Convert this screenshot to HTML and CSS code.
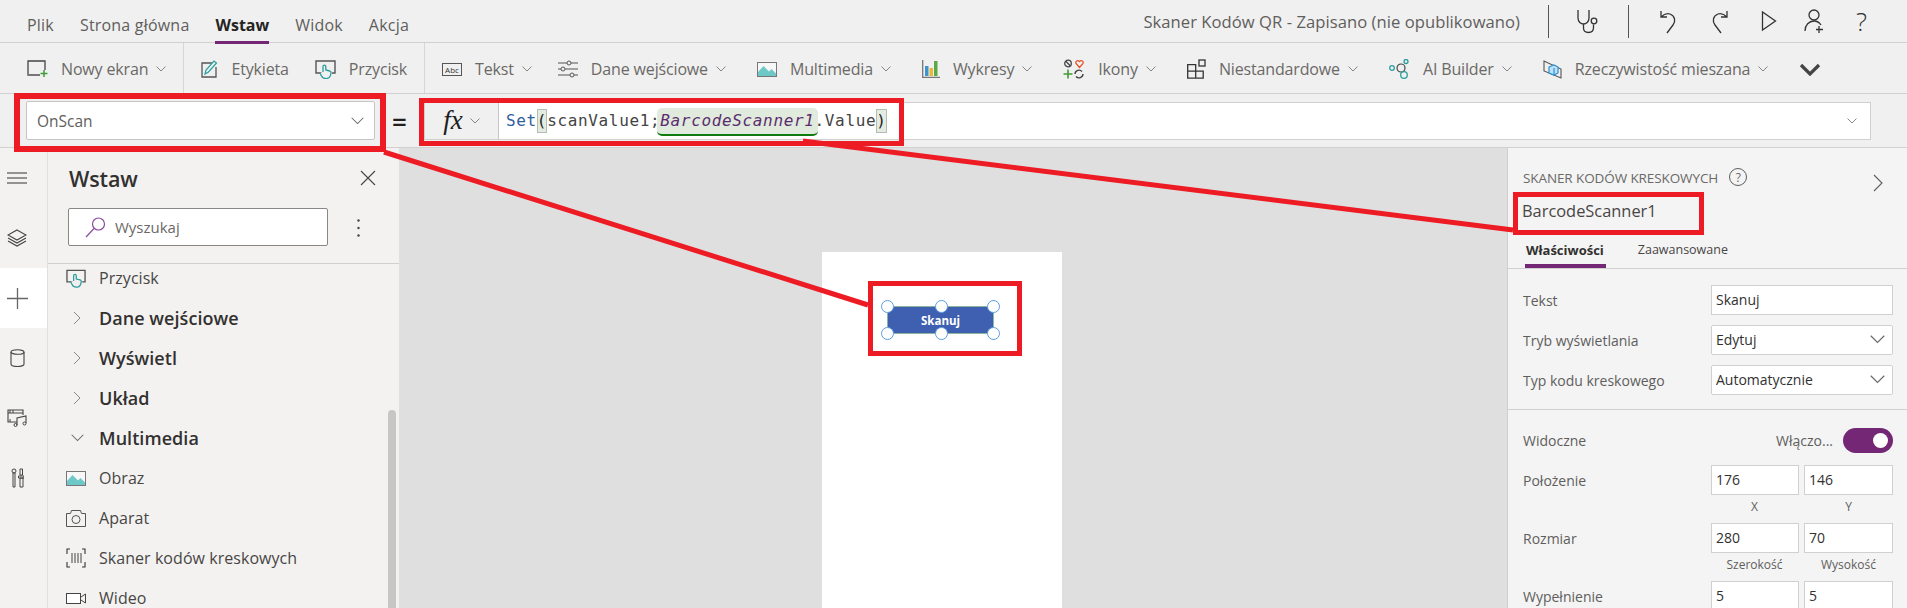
FILE: index.html
```html
<!DOCTYPE html>
<html lang="pl">
<head>
<meta charset="utf-8">
<title>Skaner Kodów QR</title>
<link rel="stylesheet" href="styles.css">
</head>
<body>
<svg class="sprite" width="0" height="0">
  <symbol id="chev" viewBox="0 0 10 6"><path d="M.5.5 5 5 9.500.5" fill="none" stroke="#6b6967" stroke-width=".8"/></symbol>
  <symbol id="chevr" viewBox="0 0 8 14"><path d="M1 1l6 6-6 6" fill="none" stroke="#8a8886"/></symbol>
  <symbol id="btn" viewBox="0 0 21 19"><path d="M7 13H1V1h19v12h-3" fill="none" stroke="#555" stroke-width="1.400"/><path d="M8 12V6.500a1.400 1.400 0 0 1 2.800 0V10l4 1c1 .3 1.300 1 1.200 2-.2 2-1 5-4 5.500-3 .3-5-1-5.800-3L5 13" fill="#f0f0f0" stroke="#2a9d9d" stroke-width="1.300"/></symbol>
  <symbol id="img" viewBox="0 0 20 15"><rect x=".5" y=".5" width="19" height="14" fill="#f7f7f7" stroke="#777"/><path d="M1 14V10L6.500 4 12 9.500l2.500-2.500L19 11.500V14z" fill="#6fc8c8"/></symbol>
</svg>

<header class="topbar">
  <nav class="tabs">
    <span class="tab">Plik</span>
    <span class="tab">Strona główna</span>
    <span class="tab tab-on">Wstaw</span>
    <span class="tab">Widok</span>
    <span class="tab">Akcja</span>
  </nav>
  <div class="title">Skaner Kodów QR - Zapisano (nie opublikowano)</div>
  <span class="vsep"></span>
  <svg class="ticon steth" width="26" height="26" viewBox="0 0 26 26"><path d="M3 2v8c0 4 3 6 5.500 6S14 14 14 10V2M8.500 16v4c0 3 2 4.500 5 4.500s5-2 5-5v-3" fill="none" stroke="#333" stroke-width="1.300"/><circle cx="19" cy="13" r="2.800" fill="none" stroke="#333" stroke-width="1.300"/></svg>
  <span class="vsep vsep2"></span>
  <svg class="ticon undo" width="20" height="26" viewBox="0 0 20 26"><path d="M2 3v6h6M2 9c3-3 6-4 9-3 5 2 6 7 3 11l-6 8" fill="none" stroke="#333" stroke-width="1.300"/></svg>
  <svg class="ticon redo" width="20" height="26" viewBox="0 0 20 26"><path d="M18 3v6h-6M18 9c-3-3-6-4-9-3-5 2-6 7-3 11l6 8" fill="none" stroke="#333" stroke-width="1.300"/></svg>
  <svg class="ticon play" width="16" height="22" viewBox="0 0 16 22"><path d="M1.500 2v18L14.500 11z" fill="none" stroke="#333" stroke-width="1.300"/></svg>
  <svg class="ticon user" width="24" height="26" viewBox="0 0 24 26"><circle cx="10" cy="7" r="5" fill="none" stroke="#333" stroke-width="1.300"/><path d="M1 23c0-6 4-10 9-10 3 0 5 1 7 4M15 25v-7M12 21.500h7" fill="none" stroke="#333" stroke-width="1.300"/></svg>
  <span class="ticon help">?</span>
</header>

<div class="toolbar">
  <div class="tool"><svg width="21" height="18" viewBox="0 0 21 18"><path d="M13 15H1V1h17v9" fill="none" stroke="#444" stroke-width="1.300"/><path d="M1 15h12" stroke="#777" stroke-width="2"/><path d="M17 10v7M13.500 13.500h7" stroke="#3f9c35" stroke-width="1.500"/></svg><span>Nowy ekran</span><svg class="chev" width="10" height="6"><use href="#chev"/></svg></div>
  <span class="tsep"></span>
  <div class="tool"><svg width="17" height="18" viewBox="0 0 17 18"><path d="M11 3H1v14h14V7" fill="none" stroke="#555" stroke-width="1.300"/><path d="M4 14l1-4 8-9 2.500 2-8 9z" fill="#e8f4f4" stroke="#2a9d9d" stroke-width="1.200"/></svg><span>Etykieta</span></div>
  <div class="tool tool-near"><svg width="21" height="19"><use href="#btn"/></svg><span>Przycisk</span></div>
  <span class="tsep"></span>
  <div class="tool"><svg width="20" height="13" viewBox="0 0 20 13"><rect x=".5" y=".5" width="19" height="12" fill="none" stroke="#555"/><text x="10" y="9.500" text-anchor="middle" class="abc">Abc</text></svg><span>Tekst</span><svg class="chev" width="10" height="6"><use href="#chev"/></svg></div>
  <div class="tool tool-near"><svg width="20" height="18" viewBox="0 0 20 18"><path d="M0 3h9M13 3h7M0 9h3M7 9h13M0 15h12M16 15h4" stroke="#555"/><circle cx="11" cy="3" r="2" fill="none" stroke="#555"/><circle cx="5" cy="9" r="2" fill="none" stroke="#555"/><circle cx="14" cy="15" r="2" fill="none" stroke="#555"/></svg><span>Dane wejściowe</span><svg class="chev" width="10" height="6"><use href="#chev"/></svg></div>
  <div class="tool"><svg width="20" height="15"><use href="#img"/></svg><span>Multimedia</span><svg class="chev" width="10" height="6"><use href="#chev"/></svg></div>
  <div class="tool"><svg width="18" height="18" viewBox="0 0 18 18"><path d="M.7 0v17.300H18" fill="none" stroke="#777" stroke-width="1.300"/><rect x="3" y="6" width="3.500" height="10" fill="#3f94d0"/><rect x="7.500" y="8" width="3.500" height="8" fill="#e8b83c"/><rect x="12" y="1" width="3.500" height="15" fill="#5aa84a"/></svg><span>Wykresy</span><svg class="chev" width="10" height="6"><use href="#chev"/></svg></div>
  <div class="tool"><svg width="22" height="20" viewBox="0 0 22 20"><circle cx="5" cy="4.500" r="3.300" fill="none" stroke="#444" stroke-width="1.300"/><path d="M2.800 2.300l4.500 4.500" stroke="#444" stroke-width="1.300"/><path d="M16.500 8.500l-3.500-4c-1-2 1.500-4 3.500-2 2-2 4.500 0 3.500 2z" fill="none" stroke="#e5532a" stroke-width="1.300"/><path d="M5 10.500v9M.5 15h9" stroke="#3f9c35" stroke-width="1.600"/><path d="M12 15a4 4 0 0 1 7-2.500M20 15a4 4 0 0 1-7 2.500" fill="none" stroke="#444" stroke-width="1.400"/></svg><span>Ikony</span><svg class="chev" width="10" height="6"><use href="#chev"/></svg></div>
  <div class="tool"><svg width="19" height="20" viewBox="0 0 19 20"><path d="M.7 5.700h8v6.500h-8zM8.700 12.200h7.500v7h-7.500zM.7 12.200h8v7h-8z" fill="none" stroke="#333" stroke-width="1.300"/><rect x="12" y="1" width="6" height="6" fill="none" stroke="#333" stroke-width="1.300"/></svg><span>Niestandardowe</span><svg class="chev" width="10" height="6"><use href="#chev"/></svg></div>
  <div class="tool"><svg width="21" height="20" viewBox="0 0 21 20"><circle cx="3" cy="9" r="2.300" fill="none" stroke="#2a9d9d" stroke-width="1.300"/><circle cx="12" cy="9" r="4" fill="none" stroke="#444" stroke-width="1.200"/><circle cx="17" cy="2.500" r="2" fill="none" stroke="#2a9d9d" stroke-width="1.300"/><circle cx="15" cy="16" r="3.300" fill="none" stroke="#2a9d9d" stroke-width="1.300"/></svg><span>AI Builder</span><svg class="chev" width="10" height="6"><use href="#chev"/></svg></div>
  <div class="tool"><svg width="19" height="19" viewBox="0 0 19 19"><path d="M1 1l17 8v9L1 11z" fill="none" stroke="#555" stroke-width="1.100"/><path d="M6 7l5-2 4 2v6l-4 2-5-2z" fill="#bfe0f5" stroke="#2d8fd5" stroke-width="1.200"/><path d="M11 8v7" stroke="#2d8fd5" stroke-width="1.200"/></svg><span>Rzeczywistość mieszana</span><svg class="chev" width="10" height="6"><use href="#chev"/></svg></div>
  <svg class="more" width="22" height="13" viewBox="0 0 22 13"><path d="M2 2l9 9 9-9" fill="none" stroke="#444" stroke-width="3.200"/></svg>
</div>

<div class="formula">
  <div class="prop"><span>OnScan</span><svg width="13" height="8" viewBox="0 0 10 6"><use href="#chev"/></svg></div>
  <div class="eq">=</div>
  <div class="fx"><span class="fx-mark">fx</span><svg width="10" height="6"><use href="#chev"/></svg></div>
  <div class="code">
    <div class="code-text"><span class="k">Set</span><span class="br">(</span>scanValue1;<span class="ref">BarcodeScanner1</span>.Value<span class="br">)</span></div>
    <svg width="10" height="6"><use href="#chev"/></svg>
  </div>
</div>

<main class="main">
  <aside class="rail">
    <div class="rail-i"><svg width="20" height="12" viewBox="0 0 20 12"><path d="M0 1h20M0 6h20M0 11h20" stroke="#333"/></svg></div>
    <div class="rail-i"><svg width="20" height="18" viewBox="0 0 20 18"><path d="M10 1l9 5-9 5-9-5zM1 9l9 5 9-5M1 12l9 5 9-5" fill="none" stroke="#444" stroke-width="1.100"/></svg></div>
    <div class="rail-i rail-on"><svg width="21" height="21" viewBox="0 0 21 21"><path d="M10.500 0v21M0 10.500h21" stroke="#666" stroke-width="1.300"/></svg></div>
    <div class="rail-i"><svg width="15" height="18" viewBox="0 0 15 18"><path d="M1 3v12c0 1.500 3 2.500 6.500 2.500S14 16.500 14 15V3" fill="none" stroke="#444" stroke-width="1.100"/><ellipse cx="7.500" cy="3" rx="6.500" ry="2.300" fill="none" stroke="#444" stroke-width="1.100"/></svg></div>
    <div class="rail-i"><svg width="21" height="18" viewBox="0 0 21 18"><path d="M10 13H1V1h15v5" fill="none" stroke="#444" stroke-width="1.100"/><path d="M1 4h15M3 1v3M6 1v3M3 10v3" stroke="#444"/><path d="M10 16V9l9-2v7" fill="none" stroke="#444" stroke-width="1.100"/><circle cx="8.500" cy="16" r="1.500" fill="none" stroke="#444"/><circle cx="17.500" cy="14.500" r="1.500" fill="none" stroke="#444"/></svg></div>
    <div class="rail-i"><svg width="13" height="20" viewBox="0 0 13 20"><circle cx="3" cy="3" r="2" fill="none" stroke="#444"/><path d="M2 5h2v14H2zM9 1h2.500v6H9zM7.500 8h5.500v2H7.500zM9 10h3v9H9z" fill="none" stroke="#444"/></svg></div>
  </aside>

  <section class="panel">
    <div class="panel-head">
      <h2>Wstaw</h2>
      <svg width="16" height="16" viewBox="0 0 16 16"><path d="M1 1l14 14M15 1L1 15" stroke="#444" stroke-width="1.100"/></svg>
    </div>
    <div class="search-row">
      <div class="search">
        <svg width="21" height="21" viewBox="0 0 21 21"><circle cx="13.500" cy="7" r="6" fill="none" stroke="#8a4d9e" stroke-width="1.200"/><path d="M9 11.500L1 20" stroke="#8a4d9e" stroke-width="1.200"/></svg>
        <span>Wyszukaj</span>
      </div>
      <svg class="dots" width="3" height="18" viewBox="0 0 3 18"><circle cx="1.500" cy="1.500" r="1.200" fill="#444"/><circle cx="1.500" cy="9" r="1.200" fill="#444"/><circle cx="1.500" cy="16.500" r="1.200" fill="#444"/></svg>
    </div>
    <div class="list">
      <div class="item"><svg width="20" height="19"><use href="#btn"/></svg><span>Przycisk</span></div>
      <div class="group"><svg width="8" height="14"><use href="#chevr"/></svg><span>Dane wejściowe</span></div>
      <div class="group"><svg width="8" height="14"><use href="#chevr"/></svg><span>Wyświetl</span></div>
      <div class="group"><svg width="8" height="14"><use href="#chevr"/></svg><span>Układ</span></div>
      <div class="group group-open"><svg width="13" height="8" viewBox="0 0 10 6"><use href="#chev"/></svg><span>Multimedia</span></div>
      <div class="item"><svg width="20" height="15"><use href="#img"/></svg><span>Obraz</span></div>
      <div class="item"><svg width="20" height="17" viewBox="0 0 20 17"><path d="M.5 3.500h4l1-3h9l1 3h4v13H.5z" fill="none" stroke="#555"/><circle cx="10" cy="9.500" r="4" fill="none" stroke="#555"/></svg><span>Aparat</span></div>
      <div class="item"><svg width="20" height="20" viewBox="0 0 20 20"><path d="M4 1H1v5M16 1h3v5M4 19H1v-5M16 19h3v-5" fill="none" stroke="#333" stroke-width="1.100"/><path d="M6 5v10M9 5v10M12 5v10M15 5v10" stroke="#444"/></svg><span>Skaner kodów kreskowych</span></div>
      <div class="item"><svg width="20" height="11" viewBox="0 0 20 11"><rect x=".5" y=".5" width="14" height="10" fill="#fff" stroke="#444"/><path d="M15 4l4.500-3v9L15 7" fill="none" stroke="#444"/></svg><span>Wideo</span></div>
    </div>
    <span class="thumb"></span>
  </section>

  <section class="canvas">
    <div class="screen">
      <div class="scan-btn">Skanuj
        <i class="h h1"></i><i class="h h2"></i><i class="h h3"></i><i class="h h4"></i><i class="h h5"></i><i class="h h6"></i>
      </div>
    </div>
  </section>

  <aside class="props">
    <div class="p-type"><span>SKANER KODÓW KRESKOWYCH</span><span class="q">?</span><svg width="10" height="18" viewBox="0 0 10 18"><path d="M1 1l8 8-8 8" fill="none" stroke="#605e5c" stroke-width="1.100"/></svg></div>
    <div class="p-name">BarcodeScanner1</div>
    <div class="p-tabs"><span class="p-tab p-tab-on">Właściwości</span><span class="p-tab">Zaawansowane</span></div>
    <div class="p-sec p-sec1">
      <div class="row"><label>Tekst</label><div class="inp">Skanuj</div></div>
      <div class="row"><label>Tryb wyświetlania</label><div class="inp inp-sel">Edytuj<svg width="15" height="9" viewBox="0 0 10 6"><use href="#chev"/></svg></div></div>
      <div class="row"><label>Typ kodu kreskowego</label><div class="inp inp-sel">Automatycznie<svg width="15" height="9" viewBox="0 0 10 6"><use href="#chev"/></svg></div></div>
    </div>
    <div class="p-sec p-sec2">
      <div class="row row-t"><label>Widoczne</label><div class="tog"><span>Włączo...</span><i class="switch"></i></div></div>
      <div class="row"><label>Położenie</label><div class="pair"><div class="inp">176</div><div class="inp">146</div></div></div>
      <div class="sub"><span>X</span><span>Y</span></div>
      <div class="row"><label>Rozmiar</label><div class="pair"><div class="inp">280</div><div class="inp">70</div></div></div>
      <div class="sub"><span>Szerokość</span><span>Wysokość</span></div>
      <div class="row"><label>Wypełnienie</label><div class="pair"><div class="inp">5</div><div class="inp">5</div></div></div>
    </div>
  </aside>
</main>

<svg class="marks" width="1907" height="608" viewBox="0 0 1907 608">
  <g fill="none" stroke="#ed1c24">
    <rect x="17" y="96" width="366" height="53" stroke-width="6"/>
    <rect x="421.500" y="100.500" width="480" height="43" stroke-width="5"/>
    <rect x="1515.500" y="194.500" width="186" height="38" stroke-width="5"/>
    <rect x="870.500" y="283.500" width="149" height="70" stroke-width="5"/>
    <path d="M384 152L868 305M803 141L1513 230" stroke-width="5"/>
  </g>
</svg>
</body>
</html>
```
FILE: styles.css
```css
* { box-sizing: border-box; }
html, body { margin: 0; height: 100%; }
body {
  width: 1907px;
  height: 608px;
  overflow: hidden;
  position: relative;
  display: flex;
  flex-direction: column;
  background: #f0f0f0;
  color: #605e5c;
  font-family: "Open Sans", "Noto Sans", sans-serif;
  font-size: 15px;
}
.sprite { position: absolute; }
svg { display: block; flex: none; }

.topbar {
  height: 43px;
  flex: none;
  display: flex;
  align-items: center;
  padding-left: 27px;
  border-bottom: 1px solid #d2d0ce;
}
.tabs { display: flex; gap: 26px; height: 42px; align-items: center; }
.tab { position: relative; font-size: 16px; letter-spacing: .2px; color: #605e5c; padding-top: 7px; }
.tab-on { color: #252423; font-weight: 700; letter-spacing: 0; }
.tab-on::after {
  content: "";
  position: absolute;
  left: 0; right: 0; bottom: -8px;
  height: 3px;
  background: #742774;
}
.title { margin-left: auto; font-size: 16.600px; letter-spacing: .05px; color: #605e5c; }
.vsep { width: 1px; height: 33px; background: #555; margin-left: 28px; }
.vsep2 { margin-left: 27px; }
.ticon { color: #333; }
.steth { margin-left: 26px; }
.undo { margin-left: 30px; }
.redo { margin-left: 30px; }
.play { margin-left: 32px; }
.user { margin-left: 27px; }
.help { font-size: 26px; font-weight: 300; margin-left: 28px; margin-right: 40px; line-height: 26px; }

.toolbar {
  height: 51px;
  flex: none;
  display: flex;
  align-items: center;
  gap: 31px;
  padding: 2px 0 0 27px;
  border-bottom: 1px solid #d2d0ce;
}
.tool { display: flex; align-items: center; gap: 13px; font-size: 16px; letter-spacing: -.15px; color: #6b6967; }
.tool-near { margin-left: -5px; }
.chev { margin-left: -5px; }
.tsep { width: 1px; height: 50px; background: #d8d6d4; margin: -2px -14px 0; align-self: flex-start; }
.abc { font-size: 8px; fill: #333; font-family: "Open Sans", sans-serif; letter-spacing: 0; }

.formula {
  height: 54px;
  flex: none;
  display: flex;
  align-items: center;
  padding-left: 26px;
  border-bottom: 1px solid #d2d0ce;
}
.prop {
  width: 349px;
  height: 39px;
  display: flex;
  align-items: center;
  justify-content: space-between;
  padding: 0 10px;
  background: #fff;
  border: 1px solid #c8c6c4;
  border-radius: 2px;
  font-size: 15.500px;
  color: #605e5c;
}
.eq { width: 49px; text-align: center; font-size: 26px; font-weight: 600; color: #201f1e; }
.fx {
  width: 75px;
  height: 38px;
  display: flex;
  align-items: center;
  justify-content: center;
  gap: 7px;
  border: 1px solid #d2d0ce;
  border-right: 1px solid #c8c6c4;
}
.fx-mark { font: italic 400 27px "Liberation Serif", serif; color: #201f1e; }
.code {
  flex: none;
  width: 1372px;
  height: 38px;
  display: flex;
  align-items: center;
  justify-content: space-between;
  padding: 0 13px 0 7px;
  background: #fff;
  border: 1px solid #d2d0ce;
  border-left: 0;
}
.code-text { font: 16px/24px "DejaVu Sans Mono", monospace; letter-spacing: .65px; color: #444; white-space: pre; display: flex; }
.k { color: #2f5f9e; }
.br { background: #e4ece2; box-shadow: inset 0 0 0 1px #b4bdb2; color: #222; }
.ref {
  font-style: italic;
  color: #5c2d6e;
  background: #e0ebdd;
  border-bottom: 2px solid #107c10;
  border-radius: 5px;
  margin: -1px -3px -3px;
  padding: 1px 3px 0;
  height: 28px;
}

.main { flex: 1; min-height: 0; display: flex; }
.rail { width: 48px; flex: none; background: #f3f2f1; border-right: 1px solid #e1dfdd; }
.rail-i { height: 60px; width: 34px; display: flex; align-items: center; justify-content: center; }
.rail-on { background: #fff; width: 47px; padding-right: 13px; }

.panel {
  width: 351px;
  flex: none;
  position: relative;
  background: #f3f2f1;
  overflow: hidden;
  display: flex;
  flex-direction: column;
}
.panel-head { height: 60px; flex: none; display: flex; align-items: center; justify-content: space-between; padding: 0 23px 0 21px; }
.panel-head h2 { margin: 0; font-size: 21.500px; font-weight: 600; color: #323130; letter-spacing: -.1px; }
.search-row {
  height: 56px;
  flex: none;
  display: flex;
  gap: 29px;
  padding-left: 20px;
  border-bottom: 1px solid #d2d0ce;
}
.search {
  width: 260px;
  height: 38px;
  display: flex;
  align-items: center;
  gap: 9px;
  padding-left: 16px;
  background: #fff;
  border: 1px solid #8a8886;
  border-radius: 2px;
  font-size: 15px;
  color: #6b6967;
}
.dots { margin-top: 11px; }
.list { flex: 1; margin-top: -6px; }
.item, .group { height: 40px; display: flex; align-items: center; color: #484644; }
.item { padding-left: 18px; gap: 13px; font-size: 16px; letter-spacing: .05px; }
.group { padding-left: 25px; gap: 18px; font-size: 18px; font-weight: 600; color: #323130; letter-spacing: .05px; }
.group-open { padding-left: 23px; gap: 15px; }
.thumb {
  position: absolute;
  left: 340px; top: 262px; bottom: 0;
  width: 8px;
  background: #c8c6c4;
  border-radius: 4px 4px 0 0;
}

.canvas { flex: 1; min-width: 0; background: #dfdfdf; padding: 104px 0 0 423px; overflow: hidden; }
.screen { width: 240px; height: 356px; background: #fff; padding: 54px 0 0 65px; }
.scan-btn {
  position: relative;
  width: 107px;
  height: 28px;
  display: flex;
  align-items: center;
  justify-content: center;
  background: #3f60b0;
  border: 1px solid #8cb4a0;
  color: #fff;
  font-size: 11.500px;
  font-weight: 700;
}
.h {
  position: absolute;
  width: 13px;
  height: 13px;
  background: #fff;
  border: 1.500px solid #5b9ee0;
  border-radius: 50%;
}
.h1 { left: -7px; top: -7px; }
.h2 { left: 47px; top: -7px; }
.h3 { right: -7px; top: -7px; }
.h4 { left: -7px; bottom: -7px; }
.h5 { left: 47px; bottom: -7px; }
.h6 { right: -7px; bottom: -7px; }

.props { width: 400px; flex: none; background: #f4f4f4; border-left: 1px solid #d2d0ce; display: flex; flex-direction: column; overflow: hidden; }
.props > * { flex: none; }
.p-type { height: 44px; padding: 16px 24px 0 15px; display: flex; align-items: flex-start; font-size: 13.500px; letter-spacing: -.1px; color: #6b6967; line-height: 28px; }
.p-type svg { margin-left: auto; margin-top: 10px; }
.q {
  width: 18px;
  height: 18px;
  margin: 4px 0 0 11px;
  border: 1px solid #605e5c;
  border-radius: 50%;
  font-size: 12px;
  line-height: 17px;
  text-align: center;
}
.p-name { height: 31px; padding-left: 14px; font-size: 16.400px; line-height: 24px; color: #484644; margin-top: 7px; }
.p-tabs { height: 39px; display: flex; gap: 32px; padding: 0 0 0 18px; border-bottom: 1px solid #d2d0ce; font-size: 12.500px; }
.p-tab { position: relative; line-height: 40px; color: #484644; }
.p-tab-on { font-weight: 700; font-size: 13px; color: #323130; border-bottom: 4px solid #742774; margin-left: -1px; padding: 0 2px 0 1px; height: 38px; }
.p-sec { padding: 15px 14px 14px 15px; }
.p-sec1 { display: flex; flex-direction: column; gap: 10px; padding-top: 16px; border-bottom: 1px solid #d2d0ce; }
.p-sec2 { padding-top: 18px; }
.row { display: flex; align-items: center; justify-content: space-between; font-size: 14px; color: #605e5c; }
.inp {
  width: 182px;
  height: 30px;
  display: flex;
  align-items: center;
  justify-content: space-between;
  padding: 0 13px 2px 4px;
  background: #fff;
  border: 1px solid #d2d0ce;
  font-size: 14px;
  color: #323130;
}
.inp-sel { border-radius: 2px; padding-right: 7px; }
.row-t { height: 25px; margin-bottom: 12px; }
.tog { display: flex; align-items: center; gap: 10px; font-size: 14px; }
.switch {
  position: relative;
  width: 50px;
  height: 25px;
  border-radius: 13px;
  background: #742774;
}
.switch::after {
  content: "";
  position: absolute;
  right: 5px; top: 5px;
  width: 15px;
  height: 15px;
  border-radius: 50%;
  background: #fff;
}
.pair { display: flex; gap: 5px; width: 182px; }
.pair .inp { flex: 1; min-width: 0; width: 0; }
.pair .inp:first-child { flex: none; width: 88px; }
.sub { display: flex; justify-content: flex-end; gap: 5px; height: 28px; font-size: 12px; line-height: 24px; color: #605e5c; }
.sub span { text-align: center; width: 89px; }
.marks { position: absolute; left: 0; top: 0; pointer-events: none; }
```
